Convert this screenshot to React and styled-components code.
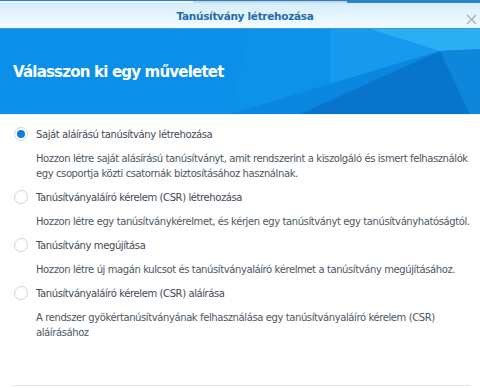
import React from "react";
import styled, { createGlobalStyle } from "styled-components";

const Global = createGlobalStyle`
  html, body { margin: 0; padding: 0; background: #fff; }
  body { font-family: "DejaVu Sans", Verdana, sans-serif; }
`;

const Window = styled.div`
  width: 480px;
  height: 388px;
  overflow: hidden;
  background: #fff;
  display: flex;
  flex-direction: column;
`;

const TopStrip = styled.div`
  height: 3px;
  display: flex;
  background: #2a86cf;
`;

const StripSeg = styled.div`
  width: ${(p) => p.$w}px;
  background: ${(p) => p.$c};
  border-top: 1px solid #2f7fbf;
`;

const TitleBar = styled.div`
  height: 25px;
  display: flex;
  align-items: center;
  justify-content: center;
  padding-left: 10px;
  position: relative;
  background: linear-gradient(#d5eefc, #f3fbff);
  border-bottom: 1px solid #3d9ad8;
`;

const Title = styled.div`
  font-size: 10.5px;
  font-weight: bold;
  letter-spacing: -0.3px;
  color: #1e6cae;
`;

const Close = styled.div`
  position: absolute;
  right: 3px;
  top: 7px;
  width: 11px;
  height: 11px;
`;

const Banner = styled.div`
  height: 85px;
  position: relative;
  background: #0b8fe9;
  display: flex;
  align-items: center;
  padding-left: 13px;
  border-bottom: 1px solid #e6f3fc;
`;

const BannerArt = styled.svg`
  position: absolute;
  inset: 0;
`;

const Heading = styled.h1`
  position: relative;
  margin: 0;
  font-size: 15px;
  letter-spacing: -0.8px;
  font-weight: bold;
  color: #fff;
`;

const Content = styled.div`
  flex: 1;
  padding: 11px 8px 0 14px;
  display: flex;
  flex-direction: column;
  gap: 8px;
`;

const Option = styled.div`
  display: flex;
  flex-direction: column;
`;

const LabelRow = styled.label`
  display: flex;
  align-items: center;
  gap: 8px;
  height: 16px;
  font-size: 10px;
  letter-spacing: -0.4px;
  color: #3f4a55;
`;

const Radio = styled.span`
  width: 14px;
  height: 14px;
  box-sizing: border-box;
  border-radius: 50%;
  border: 1px solid ${(p) => (p.$on ? "#d4d9de" : "#d0d5da")};
  background: #fff;
  display: flex;
  align-items: center;
  justify-content: center;
  &::after {
    content: "";
    width: 8px;
    height: 8px;
    border-radius: 50%;
    background: ${(p) => (p.$on ? "#0f7ee6" : "transparent")};
  }
`;

const Desc = styled.div`
  margin: 9px 0 0 22px;
  font-size: 10px;
  letter-spacing: -0.4px;
  line-height: 15px;
  color: #4c5762;
`;

const Footer = styled.div`
  margin: 0 10px 1px 13px;
  border-top: 1px solid #e3e6e9;
  height: 1px;
`;

const options = [
  {
    label: "Saját aláírású tanúsítvány létrehozása",
    desc: "Hozzon létre saját alásírású tanúsítványt, amit rendszerint a kiszolgáló és ismert felhasználók egy csoportja közti csatornák biztosításához használnak.",
    on: true,
  },
  {
    label: "Tanúsítványaláíró kérelem (CSR) létrehozása",
    desc: "Hozzon létre egy tanúsítványkérelmet, és kérjen egy tanúsítványt egy tanúsítványhatóságtól.",
  },
  {
    label: "Tanúsítvány megújítása",
    desc: "Hozzon létre új magán kulcsot és tanúsítványaláíró kérelmet a tanúsítvány megújításához.",
  },
  {
    label: "Tanúsítványaláíró kérelem (CSR) aláírása",
    desc: "A rendszer gyökértanúsítványának felhasználása egy tanúsítványaláíró kérelem (CSR) aláírásához",
  },
];

export default function App() {
  return (
    <>
      <Global />
      <Window>
        <TopStrip>
          <StripSeg $w={193} $c="#e9f6fd" />
          <StripSeg $w={154} $c="#c7d9e6" />
          <StripSeg $w={133} $c="#2a86cf" />
        </TopStrip>
        <TitleBar>
          <Title>Tanúsítvány létrehozása</Title>
          <Close>
            <svg width="11" height="11" viewBox="0 0 11 11">
              <path d="M1 1 L10 10 M10 1 L1 10" stroke="#a3adb6" strokeWidth="1.2" />
            </svg>
          </Close>
        </TitleBar>
        <Banner>
          <BannerArt width="480" height="85" viewBox="0 0 480 85" preserveAspectRatio="none">
            <polygon points="250,0 380,0 330,85 230,85" fill="#0d92ea" />
            <polygon points="330,0 370,0 440,22 330,55" fill="#179aee" />
            <polygon points="370,0 480,0 480,20 440,22" fill="#2caef2" />
            <polygon points="230,85 330,55 440,22 300,85" fill="#0a87df" />
            <polygon points="300,85 440,22 470,85" fill="#0874cc" />
            <polygon points="440,22 480,20 480,85 470,85" fill="#0e86dc" />
          </BannerArt>
          <Heading>Válasszon ki egy műveletet</Heading>
        </Banner>
        <Content>
          {options.map((o) => (
            <Option key={o.label}>
              <LabelRow>
                <Radio $on={o.on} />
                {o.label}
              </LabelRow>
              <Desc>{o.desc}</Desc>
            </Option>
          ))}
        </Content>
        <Footer />
      </Window>
    </>
  );
}
